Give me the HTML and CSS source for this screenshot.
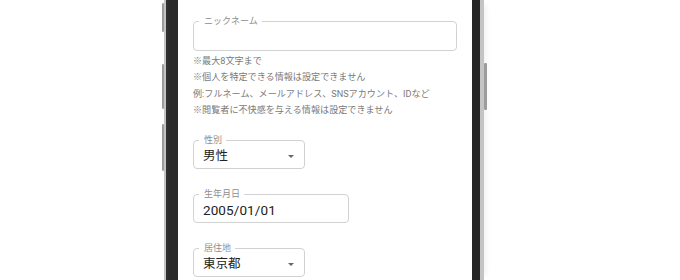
FILE: index.html
```html
<!DOCTYPE html>
<html lang="ja">
<head>
<meta charset="utf-8">
<title>プロフィール</title>
<link rel="stylesheet" href="styles.css">
</head>
<body>
<div class="stage">
  <div class="phone">
    <span class="side-btn btn-l1"></span>
    <span class="side-btn btn-l2"></span>
    <span class="side-btn btn-l3"></span>
    <span class="side-btn btn-r1"></span>
    <div class="bezel">
      <div class="screen">
        <div class="field field-nick">
          <span class="legend">ニックネーム</span>
        </div>
        <div class="help">
          <p>※最大8文字まで</p>
          <p>※個人を特定できる情報は設定できません</p>
          <p>例:フルネーム、メールアドレス、SNSアカウント、IDなど</p>
          <p>※閲覧者に不快感を与える情報は設定できません</p>
        </div>
        <div class="fields">
          <div class="field field-select">
            <span class="legend">性別</span>
            <span class="value">男性</span>
            <span class="caret"></span>
          </div>
          <div class="field field-date">
            <span class="legend">生年月日</span>
            <span class="value value-latin">2005/01/01</span>
          </div>
          <div class="field field-select field-last">
            <span class="legend">居住地</span>
            <span class="value">東京都</span>
            <span class="caret"></span>
          </div>
        </div>
      </div>
    </div>
  </div>
</div>
</body>
</html>
```

FILE: styles.css
```css
html, body {
  margin: 0;
  padding: 0;
  background: #ffffff;
}

body {
  font-family: Roboto, "Noto Sans CJK JP", sans-serif;
  color: #222222;
}

.stage {
  display: flex;
  height: 280px;
  padding-left: 164px;
  overflow: hidden;
}

.phone {
  position: relative;
  display: flex;
  height: 280px;
  padding: 0 4px 0 2px;
  background: #c4c4c4;
  box-shadow: 6px 0 6px -4px rgba(0, 0, 0, 0.06);
}

.side-btn {
  position: absolute;
  background: #9c9c9c;
  border-radius: 1px;
}

.btn-l1 { left: -2px; top: 3px; width: 2px; height: 29px; }
.btn-l2 { left: -2px; top: 64px; width: 2px; height: 45px; }
.btn-l3 { left: -2px; top: 124px; width: 2px; height: 47px; }
.btn-r1 { right: -3px; top: 63px; width: 3px; height: 47px; }

.bezel {
  display: flex;
  padding: 0 8px 0 12px;
  background: linear-gradient(90deg, #333333 0, #2a2a2a 4px, #262626 100%);
}

.screen {
  width: 294px;
  box-sizing: border-box;
  padding: 21px 15px 0 15px;
  background: #ffffff;
}

.field {
  position: relative;
  box-sizing: border-box;
  border: 1px solid #d2d2d2;
  border-radius: 4px;
  background: #ffffff;
}

.legend {
  position: absolute;
  left: 5px;
  top: -7px;
  padding: 0 4px 0 5px;
  background: #ffffff;
  font-size: 9px;
  line-height: 12px;
  color: #8e8e8e;
  white-space: nowrap;
}

.field-nick {
  width: 264px;
  height: 30px;
}

.help {
  margin-top: 2px;
  font-size: 9.1px;
  line-height: 16.4px;
  color: #7a7a7a;
}

.help p {
  margin: 0;
  white-space: nowrap;
}

.fields {
  display: flex;
  flex-direction: column;
  align-items: flex-start;
  gap: 25px;
  margin-top: 21px;
}

.field-select,
.field-date {
  display: flex;
  align-items: center;
  height: 29px;
  padding: 7px 10px 3px 9px;
}

.field-select {
  width: 112px;
}

.field-date {
  width: 156px;
}

.value {
  flex: 1;
  font-size: 12.5px;
  line-height: 16px;
  color: #222222;
  white-space: nowrap;
}

.value-latin {
  font-size: 13.5px;
  letter-spacing: 0.1px;
}

.caret {
  width: 0;
  height: 0;
  border-left: 3.5px solid transparent;
  border-right: 3.5px solid transparent;
  border-top: 3.5px solid #666666;
}
```
